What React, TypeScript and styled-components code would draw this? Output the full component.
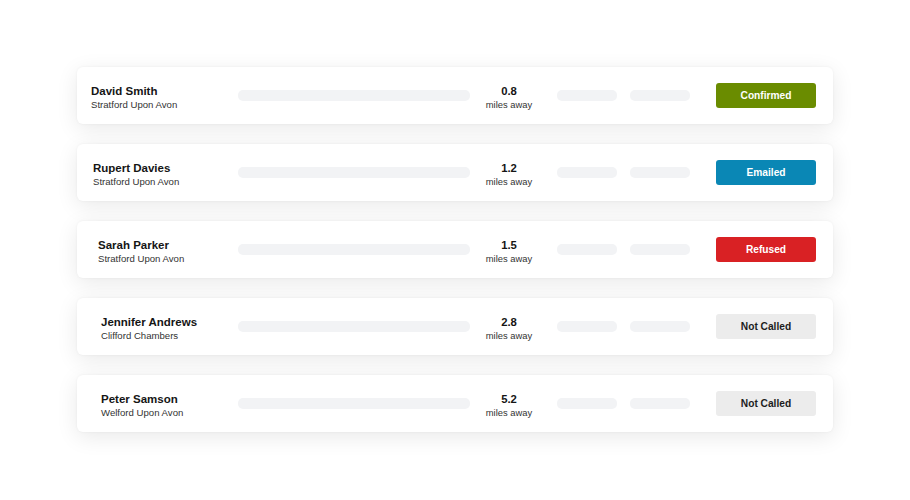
import React from "react";
import styled, { createGlobalStyle } from "styled-components";

const GlobalStyle = createGlobalStyle`
  html, body {
    margin: 0;
    padding: 0;
    background: #ffffff;
    font-family: "Liberation Sans", Arial, sans-serif;
  }
`;

type Status = "confirmed" | "emailed" | "refused" | "none";

interface Contact {
  name: string;
  place: string;
  miles: string;
  status: Status;
  label: string;
  indent: number;
}

const contacts: Contact[] = [
  { name: "David Smith", place: "Stratford Upon Avon", miles: "0.8", status: "confirmed", label: "Confirmed", indent: 0 },
  { name: "Rupert Davies", place: "Stratford Upon Avon", miles: "1.2", status: "emailed", label: "Emailed", indent: 2 },
  { name: "Sarah Parker", place: "Stratford Upon Avon", miles: "1.5", status: "refused", label: "Refused", indent: 7 },
  { name: "Jennifer Andrews", place: "Clifford Chambers", miles: "2.8", status: "none", label: "Not Called", indent: 10 },
  { name: "Peter Samson", place: "Welford Upon Avon", miles: "5.2", status: "none", label: "Not Called", indent: 10 },
];

const statusColours: Record<Status, { bg: string; fg: string }> = {
  confirmed: { bg: "#6a8c00", fg: "#ffffff" },
  emailed: { bg: "#0a87b5", fg: "#ffffff" },
  refused: { bg: "#d92124", fg: "#ffffff" },
  none: { bg: "#ececec", fg: "#1d1d1d" },
};

const Page = styled.main`
  width: 910px;
  height: 500px;
  padding-top: 67px;
  box-sizing: border-box;
  display: flex;
  flex-direction: column;
  align-items: center;
  gap: 20px;
`;

const Card = styled.article`
  width: 756px;
  height: 57px;
  box-sizing: border-box;
  background: #ffffff;
  border-radius: 6px;
  box-shadow: 0 5px 22px rgba(0, 0, 0, 0.09), 0 0 3px rgba(0, 0, 0, 0.05);
  display: flex;
  align-items: center;
  padding: 0 17px 0 14px;
`;

const Person = styled.div<{ $indent: number }>`
  width: 147px;
  padding-left: ${(p) => p.$indent}px;
  padding-top: 4px;
  box-sizing: border-box;
  display: flex;
  flex-direction: column;
  .name {
    font-size: 11.5px;
    font-weight: bold;
    color: #151515;
    line-height: 14px;
  }
  .place {
    font-size: 9.6px;
    color: #333333;
    line-height: 12px;
    margin-top: 1px;
  }
`;

const Placeholder = styled.div<{ $width: number }>`
  width: ${(p) => p.$width}px;
  height: 11px;
  border-radius: 5px;
  background: #f2f3f5;
  flex: 0 0 auto;
`;

const Distance = styled.div`
  width: 78px;
  padding-top: 4px;
  display: flex;
  flex-direction: column;
  align-items: center;
  .num {
    font-size: 11.3px;
    font-weight: bold;
    color: #151515;
    line-height: 14px;
  }
  .unit {
    font-size: 9.4px;
    color: #333333;
    line-height: 12px;
    margin-top: 1px;
  }
`;

const Extras = styled.div`
  display: flex;
  gap: 13px;
  margin-left: 9px;
`;

const StatusButton = styled.button<{ $status: Status }>`
  margin-left: auto;
  width: 100px;
  height: 25px;
  border: none;
  border-radius: 3px;
  background: ${(p) => statusColours[p.$status].bg};
  color: ${(p) => statusColours[p.$status].fg};
  font-family: "Liberation Sans", Arial, sans-serif;
  font-size: 10.2px;
  font-weight: bold;
  padding: 0;
`;

export default function App() {
  return (
    <>
      <GlobalStyle />
      <Page>
        {contacts.map((c) => (
          <Card key={c.name}>
            <Person $indent={c.indent}>
              <span className="name">{c.name}</span>
              <span className="place">{c.place}</span>
            </Person>
            <Placeholder $width={232} />
            <Distance>
              <span className="num">{c.miles}</span>
              <span className="unit">miles away</span>
            </Distance>
            <Extras>
              <Placeholder $width={60} />
              <Placeholder $width={60} />
            </Extras>
            <StatusButton $status={c.status}>{c.label}</StatusButton>
          </Card>
        ))}
      </Page>
    </>
  );
}
